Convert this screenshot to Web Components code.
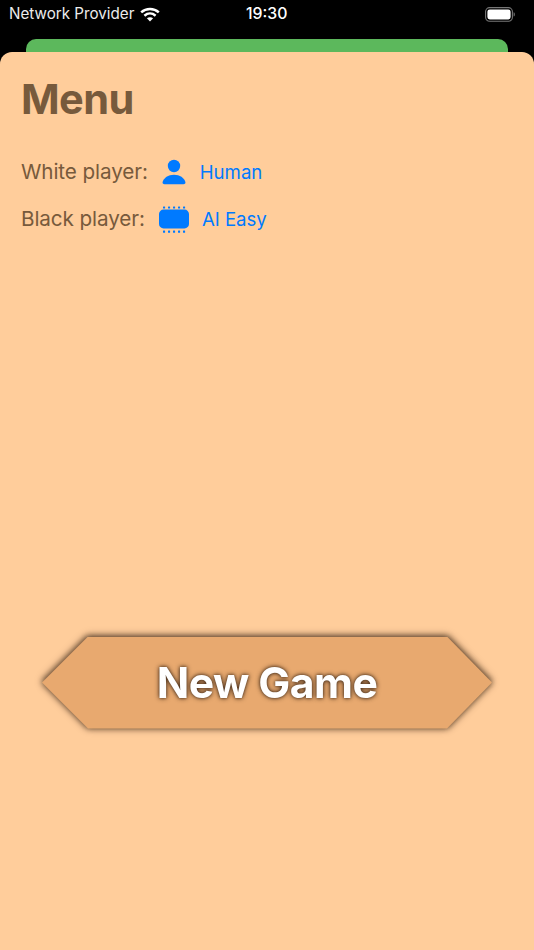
<!DOCTYPE html>
<html><head><meta charset="utf-8"><style>
html,body{margin:0;padding:0;background:#000;height:950px;overflow:hidden;font-family:Inter,"Liberation Sans",sans-serif}
</style></head><body>
<app-screen>
<status-bar slot="status"></status-bar>
<h-title>Menu</h-title>
<menu-row label="White player:" value="Human" icon="person"></menu-row>
<menu-row label="Black player:" value="AI Easy" icon="chip"></menu-row>
<new-game-button>New Game</new-game-button>
</app-screen>
<script>
const FONT='Inter,"Liberation Sans",sans-serif';
class AppScreen extends HTMLElement{constructor(){super();this.attachShadow({mode:'open'}).innerHTML=`<style>
:host{display:flex;flex-direction:column;height:950px;background:#000;box-sizing:border-box}
.head{height:39px;box-sizing:border-box}
.sheet{height:13px;margin:0 26px;background:#5cb85c;border-radius:10px 10px 0 0}
.card{flex:1;background:#ffcd9b;border-radius:12px 12px 0 0;padding:22px 21px 0 21px;display:flex;flex-direction:column;min-height:0}
</style><div class="head"><slot name="status"></slot></div><div class="sheet"></div><div class="card"><slot></slot></div>`}}
class StatusBar extends HTMLElement{constructor(){super();this.attachShadow({mode:'open'}).innerHTML=`<style>
:host{display:grid;grid-template-columns:237px auto 1fr;align-items:center;height:28px;padding:0 19px 0 9px;color:#fff;font:400 15px/18px ${FONT};box-sizing:border-box}
.l{display:flex;align-items:center;gap:6px;font-size:15.2px;color:#ececec}.t{font-size:15.8px;font-weight:500}.r{display:flex;justify-content:flex-end}
svg{display:block}
</style><div class="l"><span>Network Provider</span>
<svg width="20" height="15" viewBox="0 0 20 15" fill="none" stroke="#fff" stroke-width="2.5"><path d="M1.2 5.4C6.2 .8 13.8 .8 18.8 5.4"/><path d="M4.4 8.7C7.8 5.8 12.2 5.8 15.6 8.7"/><path d="M10 14.4L6.9 11.3C8.7 9.8 11.3 9.8 13.1 11.3Z" fill="#fff" stroke="none"/></svg></div>
<div class="t">19:30</div>
<div class="r"><svg width="30" height="15" viewBox="0 0 30 15"><rect x=".6" y=".6" width="26.8" height="13.6" rx="4" fill="none" stroke="#777" stroke-width="1.1"/><rect x="2.4" y="2.4" width="23.2" height="10" rx="2.4" fill="#fff"/><path d="M28.6 5.2c.9.3 1.2 1.2 1.2 2.2s-.3 1.9-1.2 2.2z" fill="#777"/></svg></div>`}}
class HTitle extends HTMLElement{constructor(){super();this.attachShadow({mode:'open'}).innerHTML=`<style>
:host{display:block;font:700 41.5px/50px ${FONT};color:#775a3c;letter-spacing:-.55px;margin-bottom:24.5px}
</style><slot></slot>`}}
const ICONS={
person:`<svg width="24" height="26" viewBox="0 0 24 26" fill="#007aff"><circle cx="12" cy="7" r="6.2"/><path d="M2.6 25.2C1 25.2 .3 24.3.6 23 1.7 19 6.2 15.8 12 15.8S22.3 19 23.4 23C23.7 24.3 23 25.2 21.4 25.2Z"/></svg>`,
chip:`<svg width="30" height="28" viewBox="0 0 30 28" fill="#007aff"><rect x="0" y="4.6" width="30" height="18.8" rx="4.5"/><g>${[4,9,14,19,24].map(x=>`<rect x="${x}" y="1.4" width="2.1" height="2.2" rx=".5"/><rect x="${x}" y="25.6" width="2.1" height="2.2" rx=".5"/>`).join('')}</g></svg>`};
class MenuRow extends HTMLElement{constructor(){super();const icon=this.getAttribute('icon');this.attachShadow({mode:'open'}).innerHTML=`<style>
:host{display:flex;align-items:center;height:47px;font:400 20.7px/26px ${FONT};color:#775a3c}
.i{display:flex;margin-left:14px;margin-right:${icon==='chip'?13:14}px}
.v{color:#007aff;font-size:18.6px}
.l{letter-spacing:-.1px}
</style><span class="l">${this.getAttribute('label')}</span><span class="i">${ICONS[icon]}</span><span class="v">${this.getAttribute('value')}</span>`}}
class NewGameButton extends HTMLElement{constructor(){super();this.attachShadow({mode:'open'}).innerHTML=`<style>
:host{display:block;margin:auto 21px 221.5px 21px;height:92px;filter:drop-shadow(0 -1px 3px rgba(50,30,15,.7)) drop-shadow(0 0 3px rgba(50,30,15,.45))}
.hex{height:100%;background:#e8a96f;clip-path:polygon(46px 0,calc(100% - 45px) 0,100% 50%,calc(100% - 45px) 100%,46px 100%,0 50%);display:flex;align-items:center;justify-content:center;color:#fff;font:700 42.7px/50px ${FONT};letter-spacing:-.55px;text-shadow:0 0 5px rgba(50,30,15,.9),0 0 3px rgba(50,30,15,.55)}
</style><div class="hex"><slot></slot></div>`}}
customElements.define('app-screen',AppScreen);
customElements.define('status-bar',StatusBar);
customElements.define('h-title',HTitle);
customElements.define('menu-row',MenuRow);
customElements.define('new-game-button',NewGameButton);
</script>
</body></html>
